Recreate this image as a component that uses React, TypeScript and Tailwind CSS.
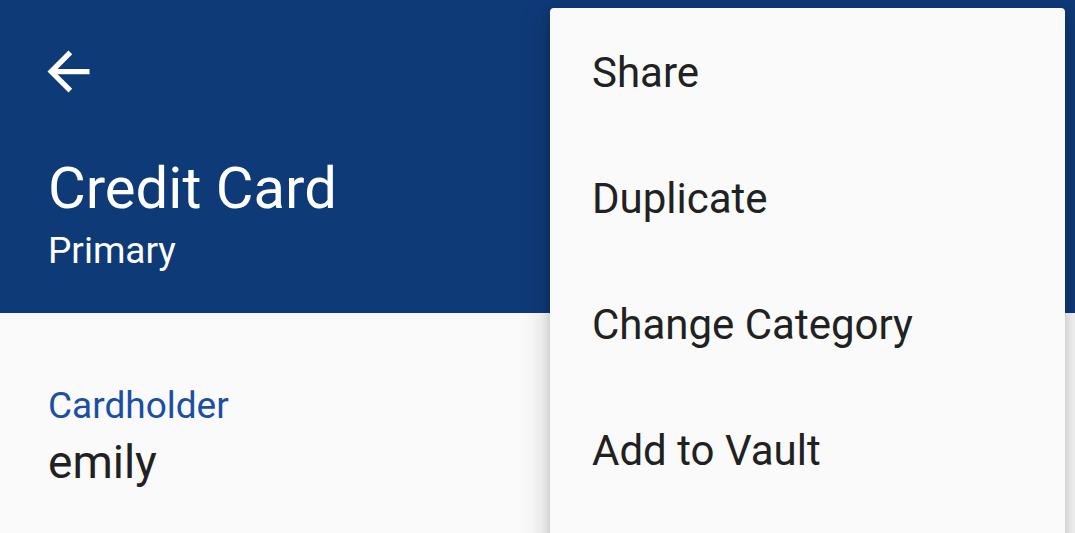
import React from 'react';

const MENU_ITEMS = ['Share', 'Duplicate', 'Change Category', 'Add to Vault'];

function BackArrow() {
  return (
    <svg width="63" height="63" viewBox="0 0 24 24" fill="#ffffff">
      <path d="M20 11H7.83l5.59-5.59L12 4l-8 8 8 8 1.41-1.41L7.83 13H20v-2z" />
    </svg>
  );
}

export default function App() {
  return (
    <div className="relative h-[533px] w-[1075px] overflow-hidden bg-[#fafafa] font-['Roboto',sans-serif]">
      {/* Toolbar */}
      <div className="flex h-[313px] flex-col bg-[#0f3a78] pl-[48px] text-white">
        <div className="-ml-[11px] mt-[40px]">
          <BackArrow />
        </div>
        <h1 className="mt-[56px] text-[58px] leading-none">Credit Card</h1>
        <p className="mt-[15px] text-[37px] leading-none">Primary</p>
      </div>

      {/* Details */}
      <div className="flex flex-col pl-[48px] pt-[74px]">
        <span className="text-[37px] leading-none text-[#1a4fa3]">Cardholder</span>
        <span className="mt-[15px] text-[46px] leading-none text-[#212121]">emily</span>
      </div>

      {/* Overflow menu */}
      <div className="absolute left-[550px] top-[8px] h-[560px] w-[515px] rounded-[4px] bg-[#fafafa] pt-[2px] shadow-[0_8px_28px_4px_rgba(0,0,0,0.16),0_4px_10px_rgba(0,0,0,0.12)]">
        {MENU_ITEMS.map((item) => (
          <div key={item} className="h-[126px] pl-[42px] text-[42px] leading-[126px] text-[#212121]">
            {item}
          </div>
        ))}
      </div>
    </div>
  );
}
